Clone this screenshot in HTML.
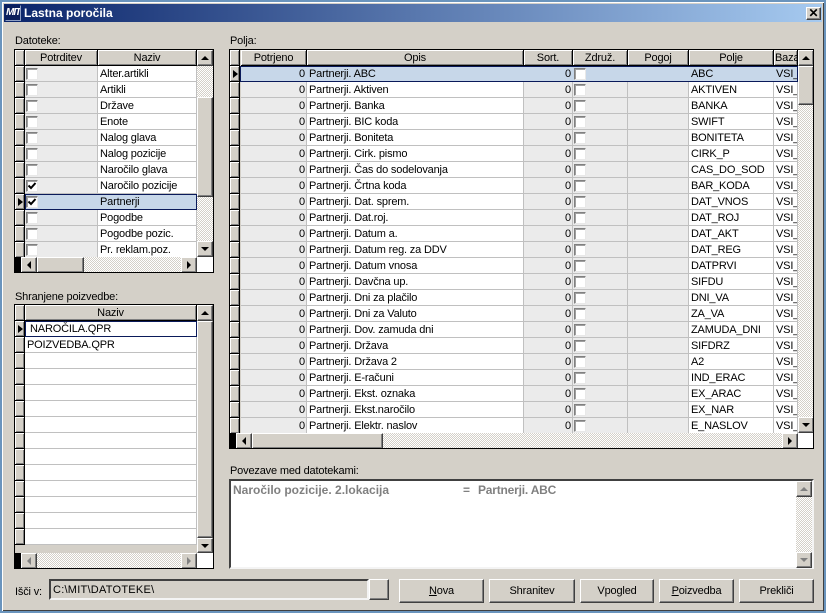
<!DOCTYPE html>
<html><head><meta charset="utf-8"><style>
html,body{margin:0;padding:0;width:826px;height:613px;overflow:hidden;background:#d4d0c8}
*{box-sizing:border-box}
body{font:11px/14px "Liberation Sans",sans-serif;color:#000;position:relative;letter-spacing:-.17px}
div,span,a{position:absolute;display:block;white-space:nowrap}
.bg{left:0;top:0;width:826px;height:613px;background:#d4d0c8;border:solid #6a94bd;border-width:2px;box-shadow:inset 1px 1px 0 #fff,inset -1px -1px 0 #404040}
.tb{left:4px;top:4px;width:818px;height:18px;background:linear-gradient(90deg,#0a246a,#a6caf0)}
.lg{left:1px;top:1px;width:16px;height:16px;background:#0a1f5c;border:1px solid #8fa0c4;border-left-color:#0a1f5c;border-top-color:#0a1f5c;color:#fff;font:italic bold 10px/14px "Liberation Sans",sans-serif;letter-spacing:-1px;overflow:hidden}
.tt{left:20px;top:2px;color:#fff;font-weight:bold;font-size:12px;letter-spacing:0}
.btn{background:#d4d0c8;border:1px solid;border-color:#fff #404040 #404040 #fff;box-shadow:inset -1px -1px 0 #808080;text-align:center}
.x{left:802px;top:3px;width:15px;height:13px;font:bold 12px/11px "Liberation Sans",sans-serif;color:#000}
.l{left:15px}
.g{background:#d4d0c8;border:1px solid #000;overflow:hidden}
.hd{top:0;height:16px;text-align:center;background:#d4d0c8;border-right:1px solid #000;border-bottom:1px solid #000;box-shadow:inset 1px 1px 0 #fff,inset -1px -1px 0 #808080;line-height:17px;overflow:hidden}
.R{left:0;height:16px}
.R span{top:0;height:16px;border-bottom:1px solid #c0c0c0;border-right:1px solid #c0c0c0;background:#fff;line-height:17px;overflow:hidden;padding:0 1px 0 2px}
.R span.ro{background:#ebebeb}
.R span.in{background:#d4d0c8;border-right:1px solid #000;border-bottom:1px solid #000;box-shadow:inset 1px 1px 0 #fff,inset -1px -1px 0 #808080;padding:0}
.R span.num{text-align:right;padding:0 1px 0 0}
.sel span{background:#c7d7e9!important;border-right-color:#c7d7e9}
.sel span.in{background:#d4d0c8!important;border-right-color:#000}
.sel .band{left:10px;top:0;height:16px;background:none!important;border:1px solid #0a1a5a;z-index:3;padding:0}
.cb{left:1px;top:2px;width:12px;height:12px;background:#fff;border:1px solid;border-color:#808080 #e8e8e8 #e8e8e8 #808080;box-shadow:inset 1px 1px 0 #a0a0a0;overflow:hidden}
.cb svg{position:absolute;left:0;top:0;width:10px;height:10px}
.ptr{left:3px;top:4px;width:0;height:0;border:4px solid transparent;border-left:5px solid #000;border-right:0}
.A .R{left:0;width:182px}
.h{background:repeating-conic-gradient(#fff 0 25%,#d4d0c8 0 50%) 0 0/2px 2px}
.au,.ad,.al,.ar{width:0;height:0;border:solid transparent}
.au{border-width:0 4px 4px;border-bottom-color:#000;left:3px;top:5px}
.ad{border-width:4px 4px 0;border-top-color:#000;left:3px;top:5px}
.al{border-width:4px 4px 4px 0;border-right-color:#000;left:5px;top:3px}
.ar{border-width:4px 0 4px 4px;border-left-color:#000;left:5px;top:3px}
.dis.au{border-bottom-color:#808080}.dis.ad{border-top-color:#808080}.dis.al{border-right-color:#808080}.dis.ar{border-left-color:#808080}
.w{background:#fff}.k{background:#000}
.big{top:579px;height:24px;line-height:23px}
u{text-decoration:underline}
.c0{left:0;width:10px}
.a1{left:10px;width:73px}.a2{left:83px;width:99px}
.b1{left:11px;width:66px}.b2{left:77px;width:217px}.b3{left:294px;width:49px}.b4{left:343px;width:55px}.b5{left:398px;width:61px}.b6{left:459px;width:85px}.b7{left:544px;width:24px}
</style></head><body>
<div class="bg"></div>
<div class="tb"><div class="lg">MIT</div><div class="tt">Lastna poročila</div><div class="btn x">✕</div></div>

<div class="l" style="top:34px">Datoteke:</div>
<div class="g A" style="left:14px;top:49px;width:200px;height:224px">
<div class="hd c0"></div><div class="hd a1">Potrditev</div><div class="hd a2">Naziv</div>
<div class="R" style="top:16px"><span class="in c0"></span><span class="ro a1"><div class="cb"></div></span><span class="a2">Alter.artikli</span></div>
<div class="R" style="top:32px"><span class="in c0"></span><span class="ro a1"><div class="cb"></div></span><span class="a2">Artikli</span></div>
<div class="R" style="top:48px"><span class="in c0"></span><span class="ro a1"><div class="cb"></div></span><span class="a2">Države</span></div>
<div class="R" style="top:64px"><span class="in c0"></span><span class="ro a1"><div class="cb"></div></span><span class="a2">Enote</span></div>
<div class="R" style="top:80px"><span class="in c0"></span><span class="ro a1"><div class="cb"></div></span><span class="a2">Nalog glava</span></div>
<div class="R" style="top:96px"><span class="in c0"></span><span class="ro a1"><div class="cb"></div></span><span class="a2">Nalog pozicije</span></div>
<div class="R" style="top:112px"><span class="in c0"></span><span class="ro a1"><div class="cb"></div></span><span class="a2">Naročilo glava</span></div>
<div class="R" style="top:128px"><span class="in c0"></span><span class="ro a1"><div class="cb"><svg viewBox="0 0 10 10"><path d="M1.5 4.5L4 7L8.5 2" fill="none" stroke="#000" stroke-width="2"/></svg></div></span><span class="a2">Naročilo pozicije</span></div>
<div class="R sel" style="top:144px"><span class="in c0"><div class="ptr"></div></span><span class="ro a1"><div class="cb"><svg viewBox="0 0 10 10"><path d="M1.5 4.5L4 7L8.5 2" fill="none" stroke="#000" stroke-width="2"/></svg></div></span><span class="a2">Partnerji</span><span class="band" style="width:172px"></span></div>
<div class="R" style="top:160px"><span class="in c0"></span><span class="ro a1"><div class="cb"></div></span><span class="a2">Pogodbe</span></div>
<div class="R" style="top:176px"><span class="in c0"></span><span class="ro a1"><div class="cb"></div></span><span class="a2">Pogodbe pozic.</span></div>
<div class="R" style="top:192px"><span class="in c0"></span><span class="ro a1"><div class="cb"></div></span><span class="a2">Pr. reklam.poz.</span></div>
<div class="h" style="left:182px;top:0;width:16px;height:207px"></div>
<div class="btn" style="left:182px;top:0;width:16px;height:16px"><div class="au"></div></div>
<div class="btn" style="left:182px;top:47px;width:16px;height:100px"></div>
<div class="btn" style="left:182px;top:191px;width:16px;height:16px"><div class="ad"></div></div>
<div class="h" style="left:0;top:207px;width:182px;height:16px"></div>
<div class="k" style="left:0;top:207px;width:6px;height:16px"></div>
<div class="btn" style="left:6px;top:207px;width:16px;height:16px"><div class="al"></div></div>
<div class="btn" style="left:22px;top:207px;width:47px;height:16px"></div>
<div class="btn" style="left:166px;top:207px;width:16px;height:16px"><div class="ar"></div></div>
<div class="w" style="left:182px;top:207px;width:16px;height:16px"></div>
</div>

<div class="l" style="top:290px">Shranjene poizvedbe:</div>
<div class="g A" style="left:14px;top:304px;width:200px;height:265px">
<div class="hd c0"></div><div class="hd" style="left:10px;width:172px">Naziv</div>
<div class="R sel" style="top:16px"><span class="in c0"><div class="ptr"></div></span><span style="left:10px;width:172px;background:#fff!important;padding-left:5px">NAROČILA.QPR</span><span class="band" style="width:172px"></span></div>
<div class="R" style="top:32px"><span class="in c0"></span><span style="left:10px;width:172px">POIZVEDBA.QPR</span></div>
<div class="R" style="top:48px"><span class="in c0"></span><span style="left:10px;width:172px"></span></div>
<div class="R" style="top:64px"><span class="in c0"></span><span style="left:10px;width:172px"></span></div>
<div class="R" style="top:80px"><span class="in c0"></span><span style="left:10px;width:172px"></span></div>
<div class="R" style="top:96px"><span class="in c0"></span><span style="left:10px;width:172px"></span></div>
<div class="R" style="top:112px"><span class="in c0"></span><span style="left:10px;width:172px"></span></div>
<div class="R" style="top:128px"><span class="in c0"></span><span style="left:10px;width:172px"></span></div>
<div class="R" style="top:144px"><span class="in c0"></span><span style="left:10px;width:172px"></span></div>
<div class="R" style="top:160px"><span class="in c0"></span><span style="left:10px;width:172px"></span></div>
<div class="R" style="top:176px"><span class="in c0"></span><span style="left:10px;width:172px"></span></div>
<div class="R" style="top:192px"><span class="in c0"></span><span style="left:10px;width:172px"></span></div>
<div class="R" style="top:208px"><span class="in c0"></span><span style="left:10px;width:172px"></span></div>
<div class="R" style="top:224px"><span class="in c0"></span><span style="left:10px;width:172px"></span></div>
<div class="btn" style="left:182px;top:0;width:16px;height:16px"><div class="au"></div></div>
<div class="btn" style="left:182px;top:16px;width:16px;height:217px"></div>
<div class="btn" style="left:182px;top:233px;width:16px;height:15px"><div class="ad"></div></div>
<div class="h" style="left:0;top:248px;width:182px;height:16px"></div>
<div class="k" style="left:0;top:248px;width:6px;height:16px"></div>
<div class="btn" style="left:6px;top:248px;width:16px;height:16px"><div class="al dis"></div></div>
<div class="btn" style="left:166px;top:248px;width:16px;height:16px"><div class="ar dis"></div></div>
<div class="w" style="left:182px;top:248px;width:16px;height:16px"></div>
</div>

<div style="left:230px;top:34px">Polja:</div>
<div class="g" style="left:229px;top:49px;width:585px;height:400px">
<div class="hd c0"></div><div class="hd b1">Potrjeno</div><div class="hd b2">Opis</div><div class="hd b3">Sort.</div><div class="hd b4">Združ.</div><div class="hd b5">Pogoj</div><div class="hd b6">Polje</div><div class="hd b7" style="text-align:left;padding-left:1px">Baza</div>
<div class="R sel" style="top:16px"><span class="in c0"><div class="ptr"></div></span><span class="ro num b1">0</span><span class="b2">Partnerji. ABC</span><span class="ro num b3">0</span><span class="ro b4"><div class="cb"></div></span><span class="ro b5"></span><span class="b6">ABC</span><span class="b7">VSI_</span><span class="band" style="width:558px"></span></div>
<div class="R" style="top:32px"><span class="in c0"></span><span class="ro num b1">0</span><span class="b2">Partnerji. Aktiven</span><span class="ro num b3">0</span><span class="ro b4"><div class="cb"></div></span><span class="ro b5"></span><span class="b6">AKTIVEN</span><span class="b7">VSI_</span></div>
<div class="R" style="top:48px"><span class="in c0"></span><span class="ro num b1">0</span><span class="b2">Partnerji. Banka</span><span class="ro num b3">0</span><span class="ro b4"><div class="cb"></div></span><span class="ro b5"></span><span class="b6">BANKA</span><span class="b7">VSI_</span></div>
<div class="R" style="top:64px"><span class="in c0"></span><span class="ro num b1">0</span><span class="b2">Partnerji. BIC koda</span><span class="ro num b3">0</span><span class="ro b4"><div class="cb"></div></span><span class="ro b5"></span><span class="b6">SWIFT</span><span class="b7">VSI_</span></div>
<div class="R" style="top:80px"><span class="in c0"></span><span class="ro num b1">0</span><span class="b2">Partnerji. Boniteta</span><span class="ro num b3">0</span><span class="ro b4"><div class="cb"></div></span><span class="ro b5"></span><span class="b6">BONITETA</span><span class="b7">VSI_</span></div>
<div class="R" style="top:96px"><span class="in c0"></span><span class="ro num b1">0</span><span class="b2">Partnerji. Cirk. pismo</span><span class="ro num b3">0</span><span class="ro b4"><div class="cb"></div></span><span class="ro b5"></span><span class="b6">CIRK_P</span><span class="b7">VSI_</span></div>
<div class="R" style="top:112px"><span class="in c0"></span><span class="ro num b1">0</span><span class="b2">Partnerji. Čas do sodelovanja</span><span class="ro num b3">0</span><span class="ro b4"><div class="cb"></div></span><span class="ro b5"></span><span class="b6">CAS_DO_SOD</span><span class="b7">VSI_</span></div>
<div class="R" style="top:128px"><span class="in c0"></span><span class="ro num b1">0</span><span class="b2">Partnerji. Črtna koda</span><span class="ro num b3">0</span><span class="ro b4"><div class="cb"></div></span><span class="ro b5"></span><span class="b6">BAR_KODA</span><span class="b7">VSI_</span></div>
<div class="R" style="top:144px"><span class="in c0"></span><span class="ro num b1">0</span><span class="b2">Partnerji. Dat. sprem.</span><span class="ro num b3">0</span><span class="ro b4"><div class="cb"></div></span><span class="ro b5"></span><span class="b6">DAT_VNOS</span><span class="b7">VSI_</span></div>
<div class="R" style="top:160px"><span class="in c0"></span><span class="ro num b1">0</span><span class="b2">Partnerji. Dat.roj.</span><span class="ro num b3">0</span><span class="ro b4"><div class="cb"></div></span><span class="ro b5"></span><span class="b6">DAT_ROJ</span><span class="b7">VSI_</span></div>
<div class="R" style="top:176px"><span class="in c0"></span><span class="ro num b1">0</span><span class="b2">Partnerji. Datum a.</span><span class="ro num b3">0</span><span class="ro b4"><div class="cb"></div></span><span class="ro b5"></span><span class="b6">DAT_AKT</span><span class="b7">VSI_</span></div>
<div class="R" style="top:192px"><span class="in c0"></span><span class="ro num b1">0</span><span class="b2">Partnerji. Datum reg. za DDV</span><span class="ro num b3">0</span><span class="ro b4"><div class="cb"></div></span><span class="ro b5"></span><span class="b6">DAT_REG</span><span class="b7">VSI_</span></div>
<div class="R" style="top:208px"><span class="in c0"></span><span class="ro num b1">0</span><span class="b2">Partnerji. Datum vnosa</span><span class="ro num b3">0</span><span class="ro b4"><div class="cb"></div></span><span class="ro b5"></span><span class="b6">DATPRVI</span><span class="b7">VSI_</span></div>
<div class="R" style="top:224px"><span class="in c0"></span><span class="ro num b1">0</span><span class="b2">Partnerji. Davčna up.</span><span class="ro num b3">0</span><span class="ro b4"><div class="cb"></div></span><span class="ro b5"></span><span class="b6">SIFDU</span><span class="b7">VSI_</span></div>
<div class="R" style="top:240px"><span class="in c0"></span><span class="ro num b1">0</span><span class="b2">Partnerji. Dni za plačilo</span><span class="ro num b3">0</span><span class="ro b4"><div class="cb"></div></span><span class="ro b5"></span><span class="b6">DNI_VA</span><span class="b7">VSI_</span></div>
<div class="R" style="top:256px"><span class="in c0"></span><span class="ro num b1">0</span><span class="b2">Partnerji. Dni za Valuto</span><span class="ro num b3">0</span><span class="ro b4"><div class="cb"></div></span><span class="ro b5"></span><span class="b6">ZA_VA</span><span class="b7">VSI_</span></div>
<div class="R" style="top:272px"><span class="in c0"></span><span class="ro num b1">0</span><span class="b2">Partnerji. Dov. zamuda dni</span><span class="ro num b3">0</span><span class="ro b4"><div class="cb"></div></span><span class="ro b5"></span><span class="b6">ZAMUDA_DNI</span><span class="b7">VSI_</span></div>
<div class="R" style="top:288px"><span class="in c0"></span><span class="ro num b1">0</span><span class="b2">Partnerji. Država</span><span class="ro num b3">0</span><span class="ro b4"><div class="cb"></div></span><span class="ro b5"></span><span class="b6">SIFDRZ</span><span class="b7">VSI_</span></div>
<div class="R" style="top:304px"><span class="in c0"></span><span class="ro num b1">0</span><span class="b2">Partnerji. Država 2</span><span class="ro num b3">0</span><span class="ro b4"><div class="cb"></div></span><span class="ro b5"></span><span class="b6">A2</span><span class="b7">VSI_</span></div>
<div class="R" style="top:320px"><span class="in c0"></span><span class="ro num b1">0</span><span class="b2">Partnerji. E-računi</span><span class="ro num b3">0</span><span class="ro b4"><div class="cb"></div></span><span class="ro b5"></span><span class="b6">IND_ERAC</span><span class="b7">VSI_</span></div>
<div class="R" style="top:336px"><span class="in c0"></span><span class="ro num b1">0</span><span class="b2">Partnerji. Ekst. oznaka</span><span class="ro num b3">0</span><span class="ro b4"><div class="cb"></div></span><span class="ro b5"></span><span class="b6">EX_ARAC</span><span class="b7">VSI_</span></div>
<div class="R" style="top:352px"><span class="in c0"></span><span class="ro num b1">0</span><span class="b2">Partnerji. Ekst.naročilo</span><span class="ro num b3">0</span><span class="ro b4"><div class="cb"></div></span><span class="ro b5"></span><span class="b6">EX_NAR</span><span class="b7">VSI_</span></div>
<div class="R" style="top:368px"><span class="in c0"></span><span class="ro num b1">0</span><span class="b2">Partnerji. Elektr. naslov</span><span class="ro num b3">0</span><span class="ro b4"><div class="cb"></div></span><span class="ro b5"></span><span class="b6">E_NASLOV</span><span class="b7">VSI_</span></div>
<div class="h" style="left:568px;top:0;width:16px;height:383px"></div>
<div class="btn" style="left:568px;top:0;width:16px;height:16px"><div class="au"></div></div>
<div class="btn" style="left:568px;top:16px;width:16px;height:39px"></div>
<div class="btn" style="left:568px;top:367px;width:16px;height:16px"><div class="ad"></div></div>
<div class="h" style="left:0;top:383px;width:568px;height:16px"></div>
<div class="k" style="left:0;top:383px;width:6px;height:16px"></div>
<div class="btn" style="left:6px;top:383px;width:16px;height:16px"><div class="al"></div></div>
<div class="btn" style="left:22px;top:383px;width:131px;height:16px"></div>
<div class="btn" style="left:552px;top:383px;width:16px;height:16px"><div class="ar"></div></div>
<div class="w" style="left:568px;top:383px;width:16px;height:16px"></div>
</div>

<div style="left:230px;top:464px">Povezave med datotekami:</div>
<div style="left:229px;top:479px;width:585px;height:90px;background:#fff;border:2px solid;border-color:#404040 #f4f4f4 #f4f4f4 #404040">
<div style="left:2px;top:2px;font-weight:bold;font-size:12px;letter-spacing:0;color:#808080">Naročilo pozicije. 2.lokacija</div>
<div style="left:232px;top:2px;font-weight:bold;font-size:12px;letter-spacing:0;color:#808080">=</div>
<div style="left:247px;top:2px;font-weight:bold;font-size:12px;letter-spacing:-.2px;color:#808080">Partnerji. ABC</div>
<div class="h" style="left:565px;top:0;width:16px;height:86px"></div>
<div class="btn" style="left:565px;top:0;width:16px;height:16px"><div class="au dis"></div></div>
<div class="btn" style="left:565px;top:71px;width:16px;height:16px"><div class="ad dis"></div></div>
</div>

<div class="l" style="top:585px">Išči v:</div>
<div style="left:49px;top:579px;width:320px;height:21px;background:#d4d0c8;border:2px solid;border-color:#404040 #f4f4f4 #f4f4f4 #404040;padding:2px 0 0 2px;line-height:14px;letter-spacing:.25px">C:\MIT\DATOTEKE\</div>
<div class="btn" style="left:369px;top:579px;width:20px;height:21px"></div>
<div class="btn big" style="left:399px;width:85px"><u>N</u>ova</div>
<div class="btn big" style="left:489px;width:86px">Shranitev</div>
<div class="btn big" style="left:580px;width:74px">Vpogled</div>
<div class="btn big" style="left:659px;width:75px"><u>P</u>oizvedba</div>
<div class="btn big" style="left:739px;width:75px">Prekliči</div>
</body></html>
